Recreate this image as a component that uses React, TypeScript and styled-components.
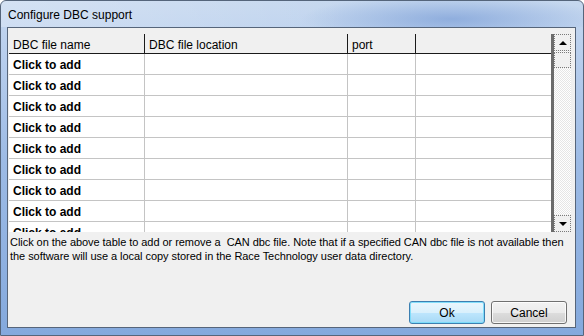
import React from "react";
import styled, { createGlobalStyle } from "styled-components";

const GlobalStyle = createGlobalStyle`
  html, body {
    margin: 0;
    padding: 0;
    background: #ffffff;
  }
  * {
    box-sizing: border-box;
  }
`;

const Window = styled.div`
  width: 584px;
  height: 336px;
  display: flex;
  flex-direction: column;
  border: 1px solid #55657b;
  border-radius: 6px 6px 0 0;
  background: linear-gradient(
    to bottom,
    #c6d8ef 0,
    #bcd1ee 40px,
    #9dbbe5 160px,
    #84a9dd 100%
  );
  overflow: hidden;
  font-family: "Liberation Sans", Arial, sans-serif;
`;

const TitleBar = styled.div`
  height: 26px;
  display: flex;
  align-items: center;
  padding-left: 7px;
  padding-top: 2px;
  font-size: 12px;
  color: #000;
  background: radial-gradient(
      ellipse 150px 24px at 450px 18px,
      rgba(110, 148, 210, 0.6),
      rgba(110, 148, 210, 0) 100%
    ),
    linear-gradient(to right, rgba(255, 255, 255, 0.25), rgba(255, 255, 255, 0) 60%);
`;

const Client = styled.div`
  flex: 1;
  margin: 0 7px 7px 6px;
  display: flex;
  flex-direction: column;
  background: #f0f0f0;
  border: 1px solid #56657a;
  padding: 6px 4px 3px 1px;
`;

const Grid = styled.div`
  height: 198px;
  flex-shrink: 0;
  display: flex;
  background: #fff;
  overflow: hidden;
`;

const Columns = styled.div`
  flex: 1;
  display: flex;
  flex-direction: column;
`;

const COLS = "136px 203px 68px 135px";

const HeaderRow = styled.div`
  display: grid;
  grid-template-columns: ${COLS};
  height: 20px;
  background: #f0f0f0;
  border-bottom: 1px solid #1a1a1a;
  flex-shrink: 0;
`;

const HeaderCell = styled.div<{ $last?: boolean }>`
  display: flex;
  align-items: center;
  padding: 2px 0 0 4px;
  font-size: 12px;
  color: #000;
  border-right: ${(p) => (p.$last ? "none" : "1px solid #1a1a1a")};
`;

const Row = styled.div`
  display: grid;
  grid-template-columns: ${COLS};
  height: 21px;
  border-bottom: 1px solid #c4c4c4;
  flex-shrink: 0;
`;

const Cell = styled.div<{ $last?: boolean }>`
  display: flex;
  align-items: center;
  padding: 2px 0 0 4px;
  font-size: 12px;
  font-weight: bold;
  color: #000;
  border-right: ${(p) => (p.$last ? "none" : "1px solid #c4c4c4")};
`;

const ScrollBar = styled.div`
  width: 20px;
  display: flex;
  flex-direction: column;
  border-left: 3px solid #6b6b6b;
  background-color: #f6f6f6;
  background-image: repeating-conic-gradient(#ffffff 0 25%, #e6e6e6 0 50%);
  background-size: 2px 2px;
`;

const ScrollButton = styled.div`
  height: 17px;
  display: flex;
  align-items: center;
  justify-content: center;
  background: #f0f0f0;
  border: 1px dotted #7a7a7a;
  flex-shrink: 0;
`;

const Thumb = styled(ScrollButton)`
  height: 16px;
  margin-top: 1px;
`;

const Track = styled.div`
  flex: 1;
`;

const Arrow = styled.span<{ $down?: boolean }>`
  width: 0;
  height: 0;
  border-left: 4px solid transparent;
  border-right: 4px solid transparent;
  ${(p) =>
    p.$down ? "border-top: 4px solid #000;" : "border-bottom: 4px solid #000;"}
`;

const Note = styled.p`
  margin: 3px 0 0 1px;
  max-width: 558px;
  font-size: 11px;
  line-height: 14px;
  letter-spacing: -0.05px;
  color: #000;
`;

const ButtonRow = styled.div`
  margin-top: auto;
  display: flex;
  justify-content: flex-end;
  gap: 6px;
  padding-right: 4px;
`;

const DialogButton = styled.button<{ $primary?: boolean }>`
  width: 76px;
  height: 23px;
  font-family: "Liberation Sans", Arial, sans-serif;
  font-size: 12px;
  color: #000;
  border-radius: 3px;
  padding: 0;
  border: 1px solid ${(p) => (p.$primary ? "#3c7fb1" : "#707070")};
  background: ${(p) =>
    p.$primary
      ? "linear-gradient(to bottom, #eaf6fd 0, #d9f0fc 50%, #bee6fd 51%, #a7d9f5 100%)"
      : "linear-gradient(to bottom, #f2f2f2 0, #ebebeb 50%, #dddddd 51%, #cfcfcf 100%)"};
  box-shadow: inset 0 0 0 1px
    ${(p) => (p.$primary ? "rgba(120, 220, 250, 0.9)" : "rgba(255, 255, 255, 0.8)")};
`;

const columns = ["DBC file name", "DBC file location", "port", ""];

export default function App() {
  const rows = Array.from({ length: 9 });
  return (
    <>
      <GlobalStyle />
      <Window>
        <TitleBar>Configure DBC support</TitleBar>
        <Client>
          <Grid>
            <Columns>
              <HeaderRow>
                {columns.map((c, i) => (
                  <HeaderCell key={i} $last={i === columns.length - 1}>
                    {c}
                  </HeaderCell>
                ))}
              </HeaderRow>
              {rows.map((_, r) => (
                <Row key={r}>
                  <Cell>Click to add</Cell>
                  <Cell />
                  <Cell />
                  <Cell $last />
                </Row>
              ))}
            </Columns>
            <ScrollBar>
              <ScrollButton>
                <Arrow />
              </ScrollButton>
              <Thumb />
              <Track />
              <ScrollButton>
                <Arrow $down />
              </ScrollButton>
            </ScrollBar>
          </Grid>
          <Note>
            Click on the above table to add or remove a&nbsp; CAN dbc file. Note that if a
            specified CAN dbc file is not available then the software will use a local copy
            stored in the Race Technology user data directory.
          </Note>
          <ButtonRow>
            <DialogButton $primary>Ok</DialogButton>
            <DialogButton>Cancel</DialogButton>
          </ButtonRow>
        </Client>
      </Window>
    </>
  );
}
